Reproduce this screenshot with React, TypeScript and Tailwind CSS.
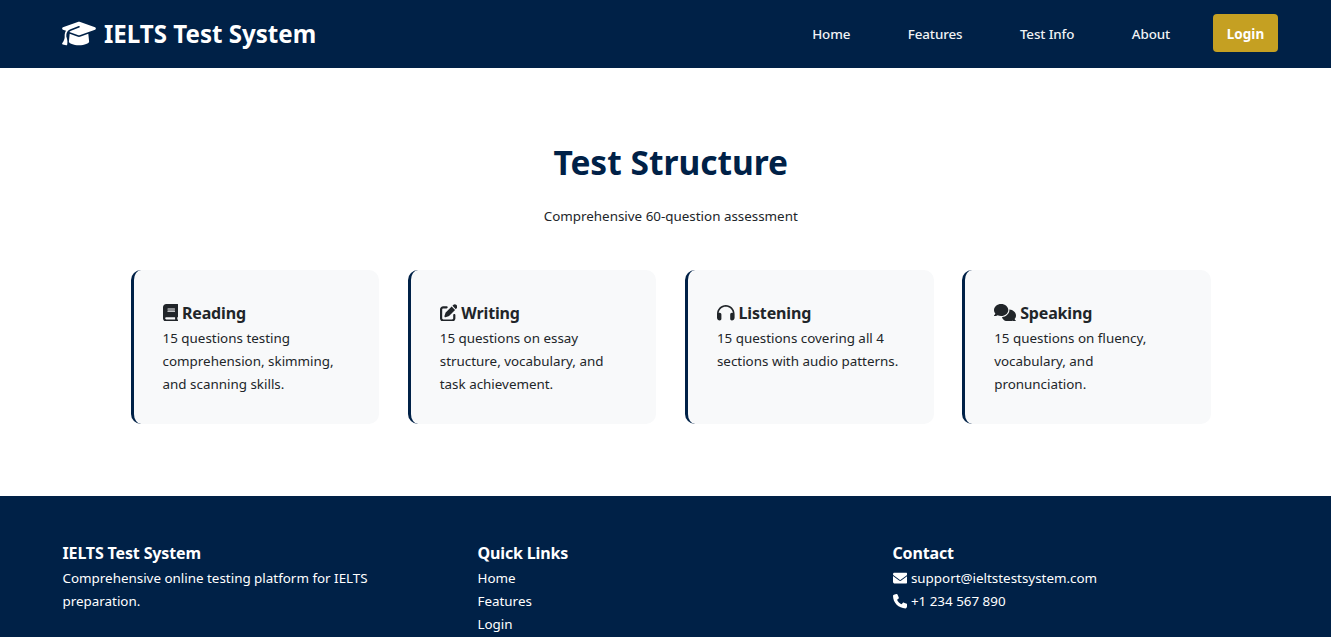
import React from 'react';
import { FaBook, FaComments, FaEnvelope, FaGraduationCap, FaHeadphones, FaPenToSquare, FaPhone } from 'react-icons/fa6';

const sections = [
    { name: 'Reading', icon: <FaBook className="h-[17.6px] w-[15.4px]" />, text: '15 questions testing comprehension, skimming, and scanning skills.' },
    { name: 'Writing', icon: <FaPenToSquare className="h-[17.6px] w-[17.6px]" />, text: '15 questions on essay structure, vocabulary, and task achievement.' },
    { name: 'Listening', icon: <FaHeadphones className="h-[17.6px] w-[17.6px]" />, text: '15 questions covering all 4 sections with audio patterns.' },
    { name: 'Speaking', icon: <FaComments className="h-[17.6px] w-[22px]" />, text: '15 questions on fluency, vocabulary, and pronunciation.' },
];

const navLinks = ['Home', 'Features', 'Test Info', 'About'];
const quickLinks = ['Home', 'Features', 'Login'];

const App: React.FC = () => {
    return (
        <div className="h-screen overflow-hidden bg-white font-['Noto_Sans',sans-serif] text-[#212529]">
            <div className="w-[1341.5px]">
                <header className="flex h-[68px] items-center justify-between bg-[#002147] pl-[62px] pr-[63.5px] text-white">
                    <div className="flex items-center gap-[8px]">
                        <FaGraduationCap className="h-[27px] w-[34px]" />
                        <span className="text-[24.1px] font-bold">IELTS Test System</span>
                    </div>
                    <nav className="flex items-center">
                        {navLinks.map((link) => (
                            <a key={link} className="mr-[57.5px] text-[13.4px] font-medium tracking-[-0.12px] text-[#f1f3f5]">{link}</a>
                        ))}
                        <button className="-ml-[14.5px] mb-[2px] h-[38px] w-[65px] rounded-[4px] bg-[#c5a022] pt-[2px] text-[13.5px] font-bold text-white">Login</button>
                    </nav>
                </header>

                <main className="pb-[72px] pt-[70px]">
                    <h1 className="text-center text-[33.5px] font-bold leading-[48px] text-[#002147]">Test Structure</h1>
                    <p className="mt-[19px] text-center text-[13.4px] leading-[23px]">Comprehensive 60-question assessment</p>
                    <div className="mx-auto mt-[42px] grid w-[1080px] grid-cols-4 gap-[28.8px]">
                        {sections.map((section) => (
                            <div key={section.name} className="h-[154px] rounded-[10px] border-l-[3px] border-[#002147] bg-[#f8f9fa] px-[28.8px] pt-[31px]">
                                <h3 className="mb-[3px] flex h-[23px] items-center gap-[4px] text-[16px] font-bold tracking-[-0.15px]">
                                    {section.icon}
                                    {section.name}
                                </h3>
                                <p className="text-[13.4px] leading-[23px]">{section.text}</p>
                            </div>
                        ))}
                    </div>
                </main>

                <footer className="grid h-[141px] grid-cols-[415px_415px_1fr] bg-[#002147] pl-[62.5px] pt-[46px] text-[13.4px] leading-[23px] text-white">
                    <div>
                        <h4 className="mb-[2px] text-[16px] font-bold tracking-[-0.15px]">IELTS Test System</h4>
                        <p className="w-[330px]">Comprehensive online testing platform for IELTS preparation.</p>
                    </div>
                    <div>
                        <h4 className="mb-[2px] text-[16px] font-bold tracking-[-0.15px]">Quick Links</h4>
                        {quickLinks.map((link) => (
                            <a key={link} className="block">{link}</a>
                        ))}
                    </div>
                    <div>
                        <h4 className="mb-[2px] text-[16px] font-bold tracking-[-0.15px]">Contact</h4>
                        <div className="flex items-center gap-[4px]"><FaEnvelope className="h-[14.4px] w-[14.4px]" />support@ieltstestsystem.com</div>
                        <div className="flex items-center gap-[4px]"><FaPhone className="h-[14.4px] w-[14.4px]" />+1 234 567 890</div>
                    </div>
                </footer>
            </div>
        </div>
    );
};

export default App;
